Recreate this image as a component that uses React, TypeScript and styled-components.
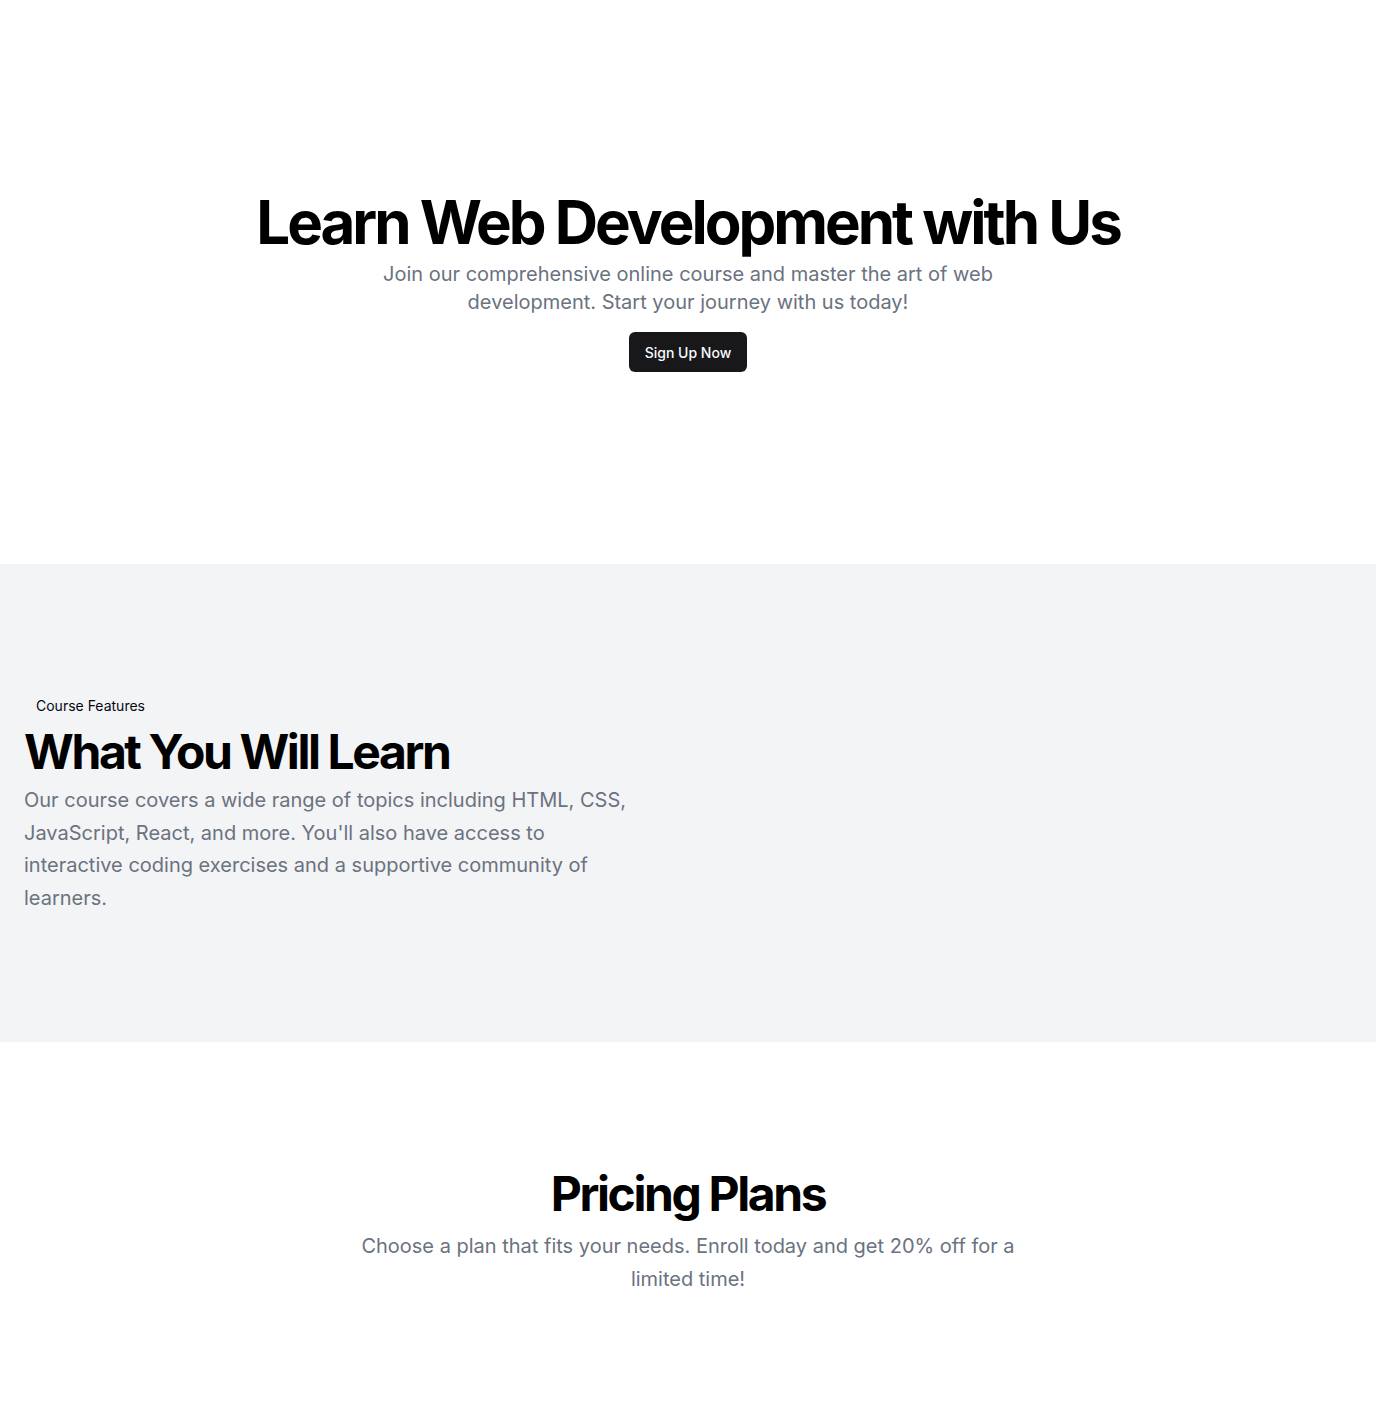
import React from "react";
import styled, { createGlobalStyle } from "styled-components";

const Global = createGlobalStyle`
  *, *::before, *::after { box-sizing: border-box; }
  html, body { margin: 0; padding: 0; background: #ffffff; }
  body {
    font-family: Inter, "Noto Sans", "Liberation Sans", sans-serif;
    color: #030712;
    -webkit-font-smoothing: antialiased;
  }
  h1, h2, p { margin: 0; }
`;

const Page = styled.main`
  display: flex;
  flex-direction: column;
  width: 100%;
`;

const Section = styled.section<{ $muted?: boolean; $pad: number; $top?: number }>`
  width: 100%;
  padding: ${(p) => p.$top ?? p.$pad}px 0 ${(p) => p.$pad}px;
  background: ${(p) => (p.$muted ? "#f3f4f6" : "#ffffff")};
`;

const Container = styled.div`
  width: 100%;
  padding: 0 24px;
`;

const Centered = styled.div`
  display: flex;
  flex-direction: column;
  align-items: center;
  text-align: center;
`;

const HeroTitle = styled.h1`
  font-size: 60px;
  line-height: 1;
  font-weight: 700;
  letter-spacing: -0.05em;
  color: #000;
`;

const Lead = styled.p<{ $lh: number; $max: number; $mt: number }>`
  margin-top: ${(p) => p.$mt}px;
  max-width: ${(p) => p.$max}px;
  font-size: 20px;
  line-height: ${(p) => p.$lh}px;
  color: #6b7280;
`;

const Button = styled.a`
  margin-top: 16px;
  display: inline-flex;
  align-items: center;
  justify-content: center;
  height: 40px;
  padding: 0 16px;
  border-radius: 6px;
  background: #18181b;
  color: #fafafa;
  font-size: 14px;
  font-weight: 500;
  text-decoration: none;
  cursor: pointer;
`;

const FeatureGrid = styled.div`
  display: grid;
  grid-template-columns: 1fr 1fr;
  gap: 48px;
  align-items: center;
`;

const FeatureText = styled.div`
  display: flex;
  flex-direction: column;
  align-items: flex-start;
`;

const Badge = styled.div`
  display: inline-block;
  padding: 4px 12px;
  border-radius: 8px;
  background: #f3f4f6;
  font-size: 14px;
  line-height: 20px;
`;

const SectionTitle = styled.h2`
  margin-top: 8px;
  font-size: 48px;
  line-height: 1;
  font-weight: 700;
  letter-spacing: -0.05em;
  color: #000;
`;

export default function App() {
  return (
    <>
      <Global />
      <Page>
        <Section $pad={192}>
          <Container>
            <Centered>
              <HeroTitle>Learn Web Development with Us</HeroTitle>
              <Lead $mt={8} $lh={28} $max={700}>
                Join our comprehensive online course and master the art of web
                development. Start your journey with us today!
              </Lead>
              <Button>Sign Up Now</Button>
            </Centered>
          </Container>
        </Section>
        <Section $muted $pad={128}>
          <Container>
            <FeatureGrid>
              <FeatureText>
                <Badge>Course Features</Badge>
                <SectionTitle>What You Will Learn</SectionTitle>
                <Lead $mt={8} $lh={32.5} $max={606}>
                  Our course covers a wide range of topics including HTML, CSS,
                  JavaScript, React, and more. You'll also have access to
                  interactive coding exercises and a supportive community of
                  learners.
                </Lead>
              </FeatureText>
              <div />
            </FeatureGrid>
          </Container>
        </Section>
        <Section $pad={128} $top={120}>
          <Container>
            <Centered>
              <SectionTitle>Pricing Plans</SectionTitle>
              <Lead $mt={12} $lh={32.5} $max={700}>
                Choose a plan that fits your needs. Enroll today and get 20% off
                for a limited time!
              </Lead>
            </Centered>
          </Container>
        </Section>
      </Page>
    </>
  );
}
